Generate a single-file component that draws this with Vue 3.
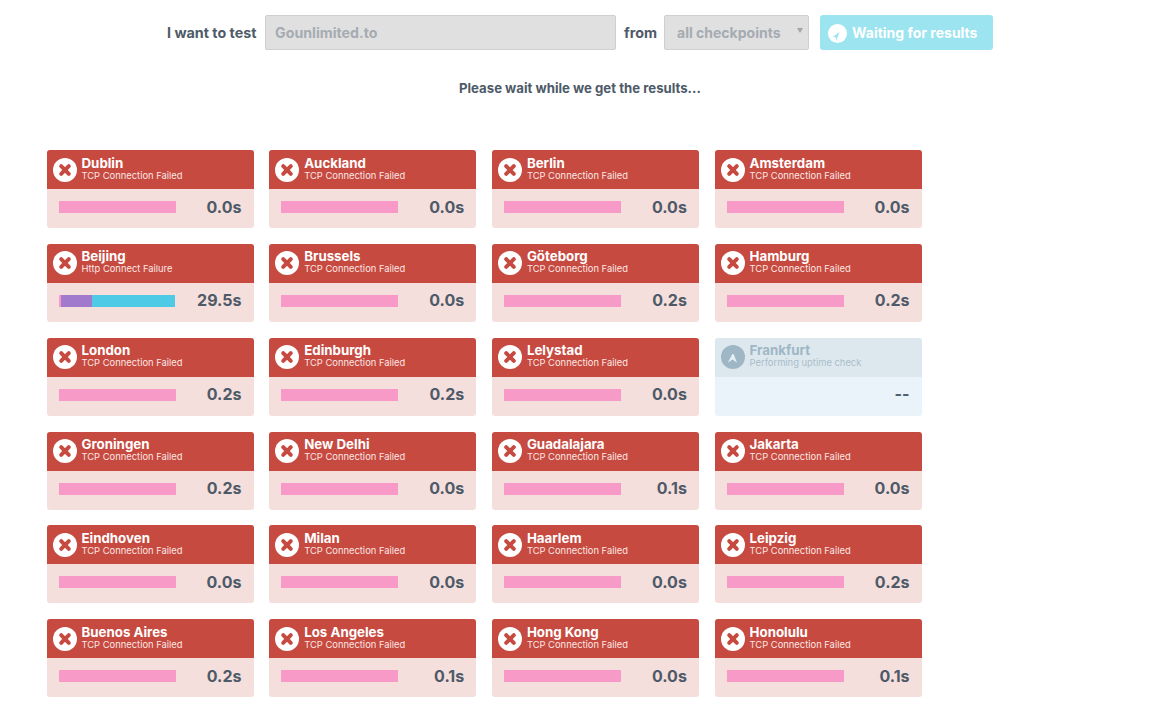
<script setup>
const checks = [
  { id: 1, city: 'Dublin', time: '0.0s' },
  { id: 2, city: 'Auckland', time: '0.0s' },
  { id: 3, city: 'Berlin', time: '0.0s' },
  { id: 4, city: 'Amsterdam', time: '0.0s' },
  { id: 5, city: 'Beijing', msg: 'Http Connect Failure', time: '29.5s', parts: [{ c: '#f79ac8', w: 2.5 }, { c: '#a27acd', w: 26 }, { c: '#4fcae6', w: 71.5 }] },
  { id: 6, city: 'Brussels', time: '0.0s' },
  { id: 7, city: 'Göteborg', time: '0.2s' },
  { id: 8, city: 'Hamburg', time: '0.2s' },
  { id: 9, city: 'London', time: '0.2s' },
  { id: 10, city: 'Edinburgh', time: '0.2s' },
  { id: 11, city: 'Lelystad', time: '0.0s' },
  { id: 12, city: 'Frankfurt', msg: 'Performing uptime check', time: '--', pending: true },
  { id: 13, city: 'Groningen', time: '0.2s' },
  { id: 14, city: 'New Delhi', time: '0.0s' },
  { id: 15, city: 'Guadalajara', time: '0.1s' },
  { id: 16, city: 'Jakarta', time: '0.0s' },
  { id: 17, city: 'Eindhoven', time: '0.0s' },
  { id: 18, city: 'Milan', time: '0.0s' },
  { id: 19, city: 'Haarlem', time: '0.0s' },
  { id: 20, city: 'Leipzig', time: '0.2s' },
  { id: 21, city: 'Buenos Aires', time: '0.2s' },
  { id: 22, city: 'Los Angeles', time: '0.1s' },
  { id: 23, city: 'Hong Kong', time: '0.0s' },
  { id: 24, city: 'Honolulu', time: '0.1s' }
]
</script>

<template>
  <div class="page">
    <form class="test-form" @submit.prevent>
      <label class="lbl">I want to test</label>
      <div class="field url">Gounlimited.to</div>
      <label class="lbl">from</label>
      <div class="field select">
        all checkpoints
        <span class="caret"></span>
      </div>
      <div class="btn">
        <svg class="btn-icon" viewBox="0 0 20 20">
          <circle cx="10" cy="10" r="10" fill="#fff" />
          <path d="M12.2 8.8 L5 13.4 L8 14 L8.6 17.6 Z" fill="#9be4f0" />
        </svg>
        <span class="btn-text">Waiting for results</span>
      </div>
    </form>

    <p class="wait">Please wait while we get the results...</p>

    <div class="grid">
      <div v-for="c in checks" :key="c.id" class="card" :class="{ pending: c.pending }">
        <div class="head">
          <svg v-if="c.pending" class="icon" viewBox="0 0 24 24">
            <circle cx="12" cy="12" r="12" fill="#9fb6c5" />
            <path d="M6.7 17.7 L11.4 9 L12.6 9 L16 17.7 L11.6 14.6 Z" fill="#e6eff4" />
          </svg>
          <svg v-else class="icon" viewBox="0 0 24 24">
            <circle cx="12" cy="12" r="12" fill="#fff" />
            <path d="M8.2 8.2 L15.8 15.8 M15.8 8.2 L8.2 15.8" stroke="#c64a40" stroke-width="4" stroke-linecap="round" />
          </svg>
          <div class="names">
            <div class="city">{{ c.city }}</div>
            <div class="msg">{{ c.msg || 'TCP Connection Failed' }}</div>
          </div>
        </div>
        <div class="body">
          <div v-if="!c.pending" class="bar">
            <span v-if="!c.parts" class="seg full"></span>
            <span v-for="p in c.parts" :key="p.c" class="seg" :style="{ width: p.w + '%', background: p.c }"></span>
          </div>
          <div class="time">{{ c.time }}</div>
        </div>
      </div>
    </div>
  </div>
</template>

<style>
body {
  background: #fff;
}
</style>

<style scoped>
.page {
  width: 1168px;
  height: 707px;
  overflow: hidden;
  font-family: Inter, "Liberation Sans", sans-serif;
  color: #4e5a68;
}

.test-form {
  display: flex;
  align-items: center;
  padding: 15px 0 0 167px;
  height: 35px;
}

.lbl {
  font-size: 14.3px;
  font-weight: 700;
}

.field {
  box-sizing: border-box;
  height: 35px;
  background: #e0e0e0;
  border: 1px solid #cfcfcf;
  border-radius: 2px;
  color: #a6abb2;
  font-size: 14.2px;
  font-weight: 700;
  display: flex;
  align-items: center;
}

.url {
  width: 351px;
  margin: 0 8px 0 8.6px;
  padding-left: 9px;
}

.select {
  position: relative;
  width: 145px;
  margin: 0 11px 0 7px;
  padding-left: 12px;
  font-size: 14px;
}

.caret {
  position: absolute;
  right: 5px;
  top: 12px;
  border-left: 3px solid transparent;
  border-right: 3px solid transparent;
  border-top: 5px solid #a0a5ab;
}

.btn {
  box-sizing: border-box;
  width: 173px;
  height: 35px;
  background: #9be4f0;
  border-radius: 3px;
  color: #fff;
  font-size: 14px;
  font-weight: 700;
  display: flex;
  align-items: center;
  padding-left: 8px;
  gap: 5px;
  white-space: nowrap;
}

.btn-text {
  margin-top: -1px;
}

.btn-icon {
  width: 19px;
  height: 19px;
  flex: none;
  margin-top: 1px;
}

.wait {
  margin: 30px 0 0;
  height: 16px;
  line-height: 16px;
  padding-left: 459px;
  font-size: 13.2px;
  font-weight: 700;
}

.grid {
  display: grid;
  grid-template-columns: repeat(4, 207px);
  column-gap: 15.7px;
  row-gap: 15.85px;
  padding: 54px 0 0 46.5px;
}

.card {
  height: 78px;
  border-radius: 3px;
  overflow: hidden;
  background: #f5dfdc;
}

.head {
  height: 39px;
  background: #c64a40;
  display: flex;
  align-items: center;
  padding-left: 6px;
  gap: 5px;
  color: #fff;
}

.icon {
  width: 24px;
  height: 24px;
  flex: none;
}

.names {
  min-width: 0;
  margin-top: -2px;
}

.city {
  font-size: 13.3px;
  font-weight: 700;
  line-height: 13px;
}

.msg {
  font-size: 9.4px;
  line-height: 11px;
  white-space: nowrap;
  color: #fbe6e3;
}

.body {
  height: 39px;
  display: flex;
  align-items: center;
  padding: 0 12px 0 12px;
}

.bar {
  width: 117px;
  height: 12px;
  display: flex;
  margin-top: -3px;
}

.seg {
  display: block;
  height: 100%;
}

.full {
  width: 100%;
  background: #f79ac8;
}

.time {
  margin-left: auto;
  margin-top: -4px;
  font-size: 16px;
  font-weight: 700;
  color: #4e5a68;
}

.pending {
  background: #eaf3f9;
}

.pending .head {
  background: #dde8ee;
  color: #9fb6c5;
}

.pending .msg {
  color: #a9bdca;
}
</style>
